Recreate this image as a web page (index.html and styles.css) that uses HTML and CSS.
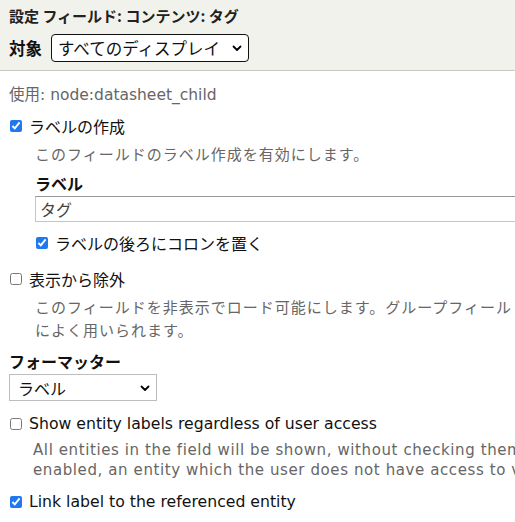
FILE: index.html
```html
<!DOCTYPE html>
<html lang="ja">
<head>
<meta charset="utf-8">
<link rel="stylesheet" href="styles.css">
</head>
<body>
<header class="head">
  <div class="title">設定 フィールド: コンテンツ: タグ</div>
  <div class="target">
    <span class="target-label">対象</span>
    <span class="select-wrap select-dark">
      <select class="sel sel-dark"><option>すべてのディスプレイ</option></select>
      <svg class="chev" width="10" height="7" viewBox="0 0 10 7"><path d="M1.5 1.5 L5 5 L8.5 1.5" fill="none" stroke="#000" stroke-width="1.8" stroke-linecap="round" stroke-linejoin="round"/></svg>
    </span>
  </div>
</header>
<main class="body">
  <div class="usage">使用: node:datasheet_child</div>

  <label class="check check-first"><input type="checkbox" checked><span>ラベルの作成</span></label>
  <div class="desc desc-ja">このフィールドのラベル作成を有効にします。</div>

  <div class="sub">
    <div class="field-title">ラベル</div>
    <input class="text" type="text" value="タグ">
    <label class="check check-sub"><input type="checkbox" checked><span>ラベルの後ろにコロンを置く</span></label>
  </div>

  <label class="check check-excl"><input type="checkbox"><span>表示から除外</span></label>
  <div class="desc desc-ja">このフィールドを非表示でロード可能にします。グループフィールドで使用する場合<br>によく用いられます。</div>

  <div class="field-title fmt-title">フォーマッター</div>
  <span class="select-wrap select-light">
    <select class="sel sel-light"><option>ラベル</option></select>
    <svg class="chev" width="10" height="7" viewBox="0 0 10 7"><path d="M1.5 1.5 L5 5 L8.5 1.5" fill="none" stroke="#000" stroke-width="1.8" stroke-linecap="round" stroke-linejoin="round"/></svg>
  </span>

  <label class="check check-en check-show"><input type="checkbox"><span>Show entity labels regardless of user access</span></label>
  <div class="desc desc-en">All entities in the field will be shown, without checking them for access. If not<br>enabled, an entity which the user does not have access to view will not be displayed.</div>

  <label class="check check-en check-link"><input type="checkbox" checked><span>Link label to the referenced entity</span></label>
</main>
</body>
</html>
```
FILE: styles.css
```css
html, body {
  margin: 0;
  padding: 0;
  background: #fff;
  overflow: hidden;
}
body {
  font-family: "Noto Sans CJK JP", "Noto Sans", sans-serif;
  color: #222;
  width: 1000px;
}
.head {
  background: #f2f2ed;
  border-bottom: 1px solid #c9c9c6;
  height: 71px;
  box-sizing: border-box;
  padding: 6px 9px 0 9px;
}
.title {
  font-size: 15px;
  font-weight: bold;
  line-height: 20px;
  color: #222;
}
.target {
  display: flex;
  align-items: center;
  margin-top: 8px;
  gap: 9px;
}
.target-label {
  font-size: 16.5px;
  font-weight: bold;
  color: #111;
}
.select-wrap {
  position: relative;
  display: inline-flex;
}
.sel {
  appearance: none;
  -webkit-appearance: none;
  font-family: "Noto Sans CJK JP", sans-serif;
  background: #fff;
  color: #111;
  margin: 0;
  outline: none;
}
.sel-dark {
  width: 198px;
  height: 28px;
  border: 1px solid #111;
  border-radius: 4px;
  font-size: 16.5px;
  padding: 0 0 0 6px;
}
.sel-light {
  width: 148px;
  height: 27px;
  border: 1px solid #bdbdbd;
  border-radius: 0;
  font-size: 16px;
  padding: 0 0 0 8px;
}
.chev {
  position: absolute;
  right: 7px;
  top: 11px;
  pointer-events: none;
}
.body {
  padding: 0 0 0 9px;
}
.usage {
  font-family: "DejaVu Sans", "Noto Sans CJK JP", sans-serif;
  font-size: 15.5px;
  color: #666;
  margin-top: 14px;
  line-height: 20px;
}
.check {
  display: flex;
  align-items: center;
  font-size: 16px;
  color: #111;
  line-height: 20px;
}
.check input {
  margin: 0 7px 0 1px;
  width: 12px;
  height: 12px;
  accent-color: #1f78f0;
}
.check-first {
  margin-top: 11px;
}
.desc {
  color: #666;
  font-size: 15px;
  margin-left: 26px;
  line-height: 23px;
  white-space: nowrap;
}
.desc-ja {
  margin-top: 6px;
  letter-spacing: 1px;
}
.sub {
  margin-left: 26px;
  margin-top: 7px;
}
.field-title {
  font-size: 16px;
  font-weight: bold;
  color: #111;
  line-height: 22px;
}
.text {
  display: block;
  box-sizing: border-box;
  width: 600px;
  height: 26px;
  border: 1px solid #c4c4c4;
  border-top-color: #999;
  margin: 2px 0 0 0;
  padding: 0 4px;
  font-family: "Noto Sans CJK JP", sans-serif;
  font-size: 16px;
  color: #444;
  outline: none;
}
.check-sub {
  margin-top: 11px;
}
.check-excl {
  margin-top: 16px;
}
.fmt-title {
  margin-top: 9px;
}
.select-light {
  margin-top: 2px;
}
.check-en {
  font-family: "DejaVu Sans", sans-serif;
  font-size: 15.7px;
}
.check-show {
  margin-top: 13px;
}
.desc-en {
  font-family: "DejaVu Sans", sans-serif;
  font-size: 15px;
  letter-spacing: 0.6px;
  margin-left: 24px;
  margin-top: 6px;
  line-height: 20px;
}
.check-link {
  margin-top: 12px;
}
```
